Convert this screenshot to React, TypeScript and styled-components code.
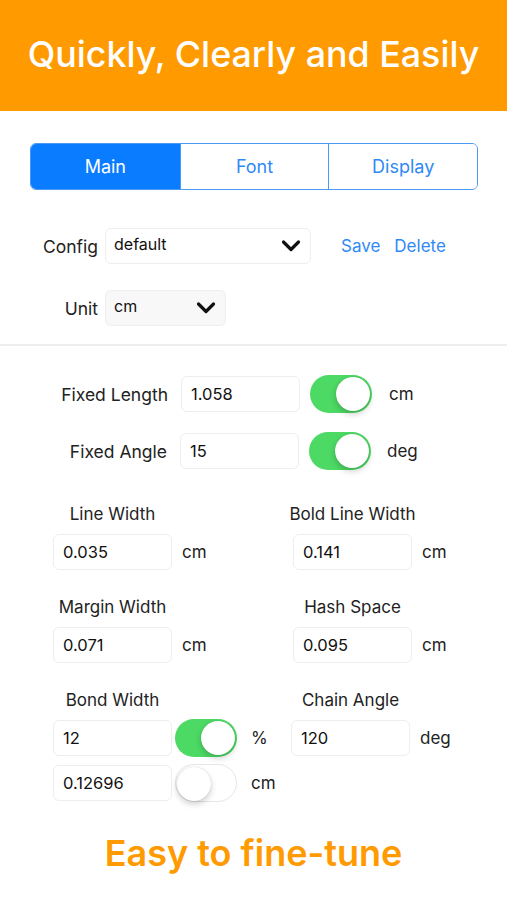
import React, { useState } from "react";
import styled, { createGlobalStyle } from "styled-components";

const GlobalStyle = createGlobalStyle`
  html, body {
    margin: 0;
    padding: 0;
    background: #ffffff;
  }
  body {
    font-family: Inter, "Noto Sans", "Liberation Sans", sans-serif;
    color: #1c1c1e;
  }
  * {
    box-sizing: border-box;
  }
`;

const orange = "#ff9a00";
const blue = "#0a7cff";
const green = "#4cd964";

const Screen = styled.div`
  width: 507px;
  height: 900px;
  background: #ffffff;
  overflow: hidden;
`;

const Header = styled.header`
  height: 111px;
  background: ${orange};
  display: flex;
  align-items: center;
  justify-content: center;
  color: #ffffff;
  font-size: 35.8px;
  font-weight: 500;
  padding-bottom: 4px;
`;

const Segmented = styled.div`
  margin: 32px 29px 0 30px;
  height: 47px;
  display: grid;
  grid-template-columns: repeat(3, 1fr);
  border: 1.5px solid #4b98f6;
  border-radius: 6px;
  overflow: hidden;
`;

const Segment = styled.button<{ $active: boolean }>`
  border: none;
  border-left: ${(p) => (p.$active ? "none" : "1.5px solid #4b98f6")};
  background: ${(p) => (p.$active ? blue : "#ffffff")};
  color: ${(p) => (p.$active ? "#ffffff" : "#2f89f7")};
  font-family: inherit;
  font-size: 18px;
  padding: 0;
  cursor: pointer;

  &:first-child {
    border-left: none;
  }
`;

const TopForm = styled.div`
  padding-top: 38px;
  display: flex;
  flex-direction: column;
  gap: 26px;
  padding-bottom: 18px;
  border-bottom: 2px solid #eeeeee;
`;

const SelectRow = styled.div`
  display: flex;
  align-items: center;
  height: 36px;
`;

const RowLabel = styled.span<{ $width: number }>`
  width: ${(p) => p.$width}px;
  text-align: right;
  font-size: 17.5px;
  color: #222;
  flex-shrink: 0;
`;

const SelectBox = styled.div<{ $width: number; $shade?: boolean }>`
  margin-left: 7px;
  width: ${(p) => p.$width}px;
  height: 36px;
  border: 1px solid #eeeeee;
  border-radius: 6px;
  background: ${(p) => (p.$shade ? "#f8f8f8" : "#ffffff")};
  display: flex;
  align-items: center;
  justify-content: space-between;
  padding: 0 9px 0 8px;
  font-size: 16px;
  color: #111;
`;

const SelectValue = styled.span`
  margin-top: -4px;
`;

const LinkButton = styled.button`
  border: none;
  background: none;
  padding: 0;
  font-family: inherit;
  font-size: 17px;
  color: #2f89f7;
  cursor: pointer;
`;

const Links = styled.div`
  display: flex;
  gap: 14px;
  margin-left: 30px;
`;

const FixedSection = styled.div`
  padding-top: 30px;
  display: flex;
  flex-direction: column;
  gap: 21px;
`;

const FixedRow = styled.div`
  display: flex;
  align-items: center;
  height: 36px;
`;

const ValueInput = styled.input<{ $offset?: number }>`
  margin-left: ${(p) => p.$offset ?? 0}px;
  width: 119px;
  height: 36px;
  border: 1px solid #eeeeee;
  border-radius: 6px;
  padding: 0 0 0 9px;
  font-family: inherit;
  font-size: 16.5px;
  color: #111;
  outline: none;
  background: #ffffff;
`;

const Unit = styled.span<{ $gap: number }>`
  margin-left: ${(p) => p.$gap}px;
  font-size: 17px;
  color: #222;
`;

const SwitchTrack = styled.button<{ $on: boolean; $gap: number }>`
  margin-left: ${(p) => p.$gap}px;
  width: 62px;
  height: 38px;
  border-radius: 19px;
  padding: 0;
  border: ${(p) => (p.$on ? "none" : "1.5px solid #e6e6e6")};
  background: ${(p) => (p.$on ? green : "#ffffff")};
  position: relative;
  cursor: pointer;
  flex-shrink: 0;
`;

const SwitchKnob = styled.span<{ $on: boolean }>`
  position: absolute;
  top: 2px;
  left: ${(p) => (p.$on ? "26px" : "1px")};
  width: 34px;
  height: 34px;
  border-radius: 50%;
  background: #ffffff;
  box-shadow: 0 3px 6px rgba(0, 0, 0, 0.2), 0 0 1px rgba(0, 0, 0, 0.2);
`;

const Grid = styled.div`
  padding: 34px 0 0 53px;
  display: grid;
  grid-template-columns: 240px 1fr;
  row-gap: 26px;
`;

const Field = styled.div<{ $shift?: number }>`
  display: flex;
  flex-direction: column;
  gap: 8px;
  margin-left: ${(p) => p.$shift ?? 0}px;
`;

const FieldLabel = styled.span`
  width: 119px;
  font-size: 17px;
  color: #222;
  line-height: 22px;
  white-space: nowrap;
  display: flex;
  justify-content: center;
`;

const FieldLine = styled.div`
  display: flex;
  align-items: center;
  height: 37px;
`;

const Tagline = styled.div`
  margin-top: 30px;
  text-align: center;
  font-size: 36px;
  font-weight: 600;
  color: ${orange};
`;

const Chevron = () => (
  <svg width="20" height="14" viewBox="0 0 20 14">
    <polyline
      points="2.5,3 10,10.5 17.5,3"
      fill="none"
      stroke="#111"
      strokeWidth="3.2"
      strokeLinecap="round"
      strokeLinejoin="round"
    />
  </svg>
);

const Switch: React.FC<{ on: boolean; gap: number }> = ({ on, gap }) => {
  const [value, setValue] = useState(on);
  return (
    <SwitchTrack $on={value} $gap={gap} onClick={() => setValue(!value)}>
      <SwitchKnob $on={value} />
    </SwitchTrack>
  );
};

export default function App() {
  const [tab, setTab] = useState("Main");

  return (
    <Screen>
      <GlobalStyle />
      <Header>Quickly, Clearly and Easily</Header>

      <Segmented>
        {["Main", "Font", "Display"].map((t) => (
          <Segment key={t} $active={tab === t} onClick={() => setTab(t)}>
            {t}
          </Segment>
        ))}
      </Segmented>

      <TopForm>
        <SelectRow>
          <RowLabel $width={98}>Config</RowLabel>
          <SelectBox $width={206}>
            <SelectValue>default</SelectValue>
            <Chevron />
          </SelectBox>
          <Links>
            <LinkButton>Save</LinkButton>
            <LinkButton>Delete</LinkButton>
          </Links>
        </SelectRow>
        <SelectRow>
          <RowLabel $width={98}>Unit</RowLabel>
          <SelectBox $width={121} $shade>
            <SelectValue>cm</SelectValue>
            <Chevron />
          </SelectBox>
        </SelectRow>
      </TopForm>

      <FixedSection>
        <FixedRow>
          <RowLabel $width={168}>Fixed Length</RowLabel>
          <ValueInput $offset={13} defaultValue="1.058" />
          <Switch on gap={10} />
          <Unit $gap={17}>cm</Unit>
        </FixedRow>
        <FixedRow>
          <RowLabel $width={167}>Fixed Angle</RowLabel>
          <ValueInput $offset={13} defaultValue="15" />
          <Switch on gap={10} />
          <Unit $gap={16}>deg</Unit>
        </FixedRow>
      </FixedSection>

      <Grid>
        <Field>
          <FieldLabel>Line Width</FieldLabel>
          <FieldLine>
            <ValueInput defaultValue="0.035" />
            <Unit $gap={10}>cm</Unit>
          </FieldLine>
        </Field>
        <Field>
          <FieldLabel>Bold Line Width</FieldLabel>
          <FieldLine>
            <ValueInput defaultValue="0.141" />
            <Unit $gap={10}>cm</Unit>
          </FieldLine>
        </Field>

        <Field>
          <FieldLabel>Margin Width</FieldLabel>
          <FieldLine>
            <ValueInput defaultValue="0.071" />
            <Unit $gap={10}>cm</Unit>
          </FieldLine>
        </Field>
        <Field>
          <FieldLabel>Hash Space</FieldLabel>
          <FieldLine>
            <ValueInput defaultValue="0.095" />
            <Unit $gap={10}>cm</Unit>
          </FieldLine>
        </Field>

        <Field>
          <FieldLabel>Bond Width</FieldLabel>
          <FieldLine>
            <ValueInput defaultValue="12" />
            <Switch on gap={3} />
            <Unit $gap={14}>%</Unit>
          </FieldLine>
          <FieldLine>
            <ValueInput defaultValue="0.12696" />
            <Switch on={false} gap={3} />
            <Unit $gap={14}>cm</Unit>
          </FieldLine>
        </Field>
        <Field $shift={-2}>
          <FieldLabel>Chain Angle</FieldLabel>
          <FieldLine>
            <ValueInput defaultValue="120" />
            <Unit $gap={10}>deg</Unit>
          </FieldLine>
        </Field>
      </Grid>

      <Tagline>Easy to fine-tune</Tagline>
    </Screen>
  );
}
